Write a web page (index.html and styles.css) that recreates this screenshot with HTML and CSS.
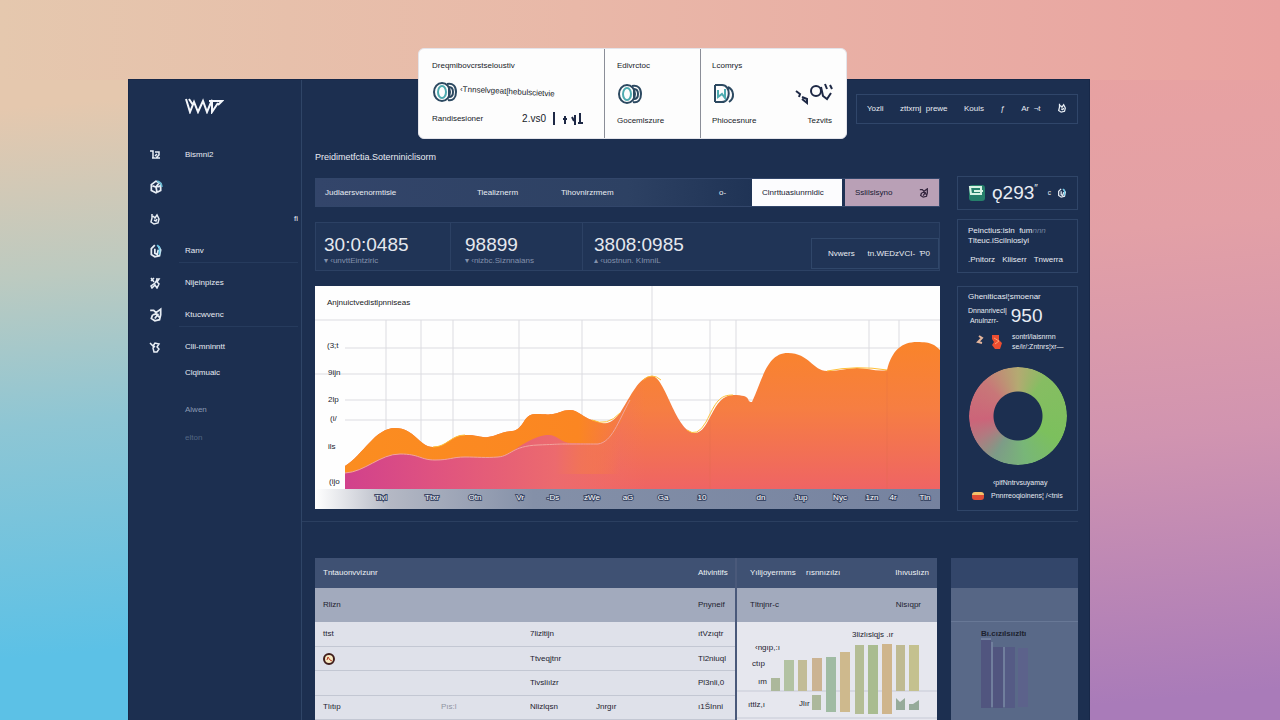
FILE: index.html
```html
<!DOCTYPE html>
<html lang="en">
<head>
<meta charset="utf-8">
<title>Dashboard</title>
<link rel="stylesheet" href="styles.css">
</head>
<body>
<svg class="defs" aria-hidden="true">
  <symbol id="i-flag" viewBox="0 0 12 12"><path d="M1 2h3v7M3 9h3M6 3h4v3L7 9h4M8 5l-2 2"/></symbol>
  <symbol id="i-globe" viewBox="0 0 12 12"><path d="M6 1 2 4v5l4 2 4-2V3L6 1ZM3 5l3 1 3-4M6 6l1 5M7 6l3-1" /><path d="M7 1c3 1 4 3 4 5" stroke="#68b8d0"/></symbol>
  <symbol id="i-user" viewBox="0 0 12 12"><path d="M3 1v4l-1 4 3 2 4-1 1-4-2-4-2 3-2-2M5 7l2 1 1-2"/></symbol>
  <symbol id="i-drop" viewBox="0 0 12 12"><path d="M5 1 2 4v5l3 2 4-1 1-5-2-3M5 4v4l2 1 1-4" /><path d="m7 1 2 2v6" stroke="#68c8e8"/></symbol>
  <symbol id="i-tools" viewBox="0 0 12 12"><path d="m2 1 3 4M5 1 2 4M7 2h3L8 5l2 2-2 4-2-3-3 3-1-2 4-3 2-3"/></symbol>
  <symbol id="i-gear" viewBox="0 0 12 12"><path d="M1 2h3l2 2 4-3v5l-1 4-4 1-3-2 1-3M3 6l3-1 3 3M5 9l3-4"/></symbol>
  <symbol id="i-cup" viewBox="0 0 12 12"><path d="m1 2 3 3 2-3 4 1-2 3 2 2-2 3H5L4 7l2-2"/></symbol>
  <symbol id="i-coin" viewBox="0 0 26 22"><ellipse cx="10" cy="11" rx="8" ry="9"/><ellipse cx="10" cy="11" rx="4" ry="6" stroke="#4eabb0"/><path d="M15 3c6-1 9 2 9 8s-3 9-8 8M17 6v10c3 0 4-2 4-5s-1-5-4-5" /></symbol>
</svg>

<main class="app">
  <section class="summary" aria-label="Summary">
    <div class="tile tile-wide">
      <h2>Dreqmibovcrstseloustiv</h2>
      <div class="tile-mid"><svg class="coin"><use href="#i-coin"/></svg><span class="tilt">‹Tnnselvgeat[hebulscietvie</span></div>
      <div class="tile-foot"><span>Randisesioner</span>
        <span class="spark">2.vs0 <svg width="34" height="14" viewBox="0 0 34 14"><path d="M4 0v13M15 4v8M13 7h4M22 5l2 4M25 3v10M30 1v10M28 11h5"/></svg></span></div>
    </div>
    <div class="tile">
      <h2>Edivrctoc</h2>
      <div class="tile-mid"><svg class="coin"><use href="#i-coin"/></svg></div>
      <div class="tile-foot"><span>Gocemlszure</span></div>
    </div>
    <div class="tile tile-last">
      <h2>Lcomrys</h2>
      <div class="tile-mid"><svg class="coin" viewBox="0 0 26 22"><path d="M3 2v17M3 2h7c9 0 9 17 0 17H3M16 4c6 3 7 11 1 15"/><path d="M6 7v7l4-3 3 4V6" stroke="#4eabb0"/></svg>
        <svg class="scrib" viewBox="0 0 40 24"><path d="m2 9 4 3-1 3M8 15l5 2v4l-5-4"/><circle cx="22" cy="9" r="5"/><path d="m27 5 2 9 4 3 4-6M31 2l2 5M36 3l2 4"/></svg></div>
      <div class="tile-foot"><span>Phiocesnure</span><span>Tezvits</span></div>
    </div>
  </section>

  <aside class="sidebar">
    <svg class="logo" viewBox="0 0 40 16" role="img" aria-label="Logo"><path d="M2 1 6 14 10 4l4 10 5-11 4 11 5-12v12l6-9M5 1l4 6M25 3h13l-4 4"/></svg>
    <nav>
      <ul>
        <li><svg class="ic"><use href="#i-flag"/></svg><a href="#">Bismni2</a></li>
        <li><svg class="ic big"><use href="#i-globe"/></svg></li>
        <li><svg class="ic"><use href="#i-user"/></svg><span class="mark">ﬁ</span></li>
        <li class="rule"><svg class="ic big"><use href="#i-drop"/></svg><a href="#">Ranv</a></li>
        <li><svg class="ic"><use href="#i-tools"/></svg><a href="#">Nijeinpizes</a></li>
        <li class="rule"><svg class="ic big"><use href="#i-gear"/></svg><a href="#">Ktucwvenc</a></li>
        <li><svg class="ic"><use href="#i-cup"/></svg><a href="#">Clli-mninntt</a></li>
        <li class="short"><span class="ic"></span><a href="#">Clqimuaic</a></li>
        <li class="dim first"><span class="ic"></span><a href="#">Alwen</a></li>
        <li class="dim faint"><span class="ic"></span><a href="#">elton</a></li>
      </ul>
    </nav>
  </aside>

  <div class="content">
    <header class="topbar">
      <nav class="menu">
        <a href="#">Yozli</a><a href="#">zttxrnj&nbsp; prewe</a><a href="#">Kouis</a><a href="#">ƒ</a><a href="#">Ar&nbsp; ¬t</a>
        <button aria-label="Account"><svg class="ic small"><use href="#i-user"/></svg></button>
      </nav>
    </header>

    <div class="columns">
      <div class="primary">
        <h1>Preidimetfctia.Soterniniclisorm</h1>
        <div class="filters">
          <div class="fields">
            <button>Judlaersvenormtisie</button><button>Tiealiznerm</button><button>Tihovnirzrmem</button><button aria-label="Options">o-</button>
          </div>
          <button class="btn white">Clnrttuasiunrnldic</button>
          <button class="btn pink">Sslilslsyno <svg class="ic small"><use href="#i-gear"/></svg></button>
        </div>

        <div class="metrics">
          <div class="metric"><strong>30:0:0485</strong><span>▾ ‹unvttEintziric</span></div>
          <div class="metric"><strong>98899</strong><span>▾ ‹nizbc.Siznnaians</span></div>
          <div class="metric"><strong>3808:0985</strong><span>▴ ‹uostnun. KImniL</span></div>
          <div class="chip"><button>Nvwers</button><button>tn.WEDzVCI-&nbsp; Ƥ0</button></div>
        </div>

        <section class="chart">
          <h2>Anjnuictvedistlpnniseas</h2>
          <svg class="plot" viewBox="0 0 625 189" role="img" aria-label="Area chart">
            <defs>
              <linearGradient id="warm" x1="0" y1="0" x2="0" y2="1"><stop offset="0" stop-color="#fa842a"/><stop offset=".45" stop-color="#f67e42"/><stop offset="1" stop-color="#ef6464"/></linearGradient>
              <linearGradient id="rose" gradientUnits="userSpaceOnUse" x1="30" y1="0" x2="330" y2="0"><stop offset="0" stop-color="#d1418c"/><stop offset=".3" stop-color="#df5380"/><stop offset=".7" stop-color="#ec6a6e"/><stop offset="1" stop-color="#f1706a" stop-opacity="0"/></linearGradient>
              <linearGradient id="axis" x1="0" y1="0" x2="1" y2="0"><stop offset="0" stop-color="#fff"/><stop offset=".12" stop-color="#b4b8c4"/><stop offset=".35" stop-color="#8490a8"/><stop offset="1" stop-color="#75829f"/></linearGradient>
              <linearGradient id="gold" gradientUnits="userSpaceOnUse" x1="30" y1="0" x2="305" y2="0"><stop offset="0" stop-color="#fb8d20"/><stop offset=".85" stop-color="#fb8622"/><stop offset="1" stop-color="#fb8622" stop-opacity="0"/></linearGradient>
            </defs>
            <path class="grid" d="M0 0H625M30 28H625M0 54H625M30 80H625M30 100H625M71 0V130M106 0V130M138 0V130M204 0V130M267 0V130M337-34V60M395 0V100M421 0V80M554 0V60M584 0V60"/>
            <rect y="169" width="625" height="20" fill="url(#axis)"/>
            <path fill="url(#warm)" d="M30 146C48 135 60 108 80 108S104 127 118 127 136 115 150 115 165 118 173 117 185 112 197 111 208 94 220 94 231 95 238 94 247 90 255 90 269 98 277 100 287 104 292 103 301 98 305 93C316 76 324 56 337 56S361 113 380 113C395 113 397 75 418 75S430 82 437 82C448 58 452 33 473 33S498 51 512 51 532 48 542 48 563 52 572 50C577 30 587 22 602 22S620 25 625 30V169H30Z"/>
            <path fill="url(#gold)" d="M30 146C48 135 60 108 80 108S104 127 118 127 136 115 150 115 165 118 173 117 185 112 197 111 208 94 220 94 231 95 238 94 247 90 255 90 269 98 277 100 287 104 292 103 301 98 305 93V154H30Z"/>
            <path fill="url(#rose)" d="M30 153C50 152 65 134 85 134S105 140 120 140 137 137 150 137 170 138 183 137 203 124 223 117 242 123 257 123 270 124 283 124C300 122 308 98 318 78L330 60V169H30Z"/>
            <path class="edge" d="M30 153C50 152 65 134 85 134S105 140 120 140 137 137 150 137 170 138 183 137 197 126 223 125 242 124 257 124 270 124 283 124C297 122 303 102 315 80"/>
            <path class="rim" d="M118 127C132 127 136 115 150 115M277 100Q292 107 305 93M328 60Q337 52 346 60M372 110Q382 118 391 102C401 82 404 75 418 75M512 51Q542 45 572 50"/>
            <path class="seam" d="M395 100V169M572 52V169"/>
            <g class="lab"><text x="12" y="28">(3;t</text><text x="13" y="55">9ijn</text><text x="13" y="82">2lp</text><text x="15" y="101">(i/</text><text x="13" y="129">ils</text><text x="14" y="164">(ijo</text></g>
            <g class="lab ticks"><text x="66" y="180">Tivi</text><text x="117" y="180">Ttxr</text><text x="160" y="180">Otn</text><text x="205" y="180">Vr</text><text x="238" y="180">-Ds</text><text x="277" y="180">zWe</text><text x="313" y="180">aG</text><text x="348" y="180">Ga</text><text x="387" y="180">10</text><text x="446" y="180">dn</text><text x="486" y="180">Jup</text><text x="525" y="180">Nyc</text><text x="557" y="180">1zn</text><text x="578" y="180">4r</text><text x="610" y="180">Tin</text></g>
          </svg>
        </section>
      </div>

      <aside class="rail">
        <div class="card score">
          <svg width="18" height="18" viewBox="0 0 18 18"><rect x="1" y="1" width="16" height="16" rx="3" fill="#267f6b"/><path d="M2 3h11v7H3zM6 7h9" fill="none" stroke="#d8f3e4" stroke-width="2"/></svg>
          <strong>ǫ293<sup>″</sup></strong><small>c</small><svg class="ic small"><use href="#i-drop"/></svg>
        </div>
        <div class="card note">
          <p>Peinctius:isln &nbsp;fum<i>nnn</i><br>Tlteuc.iScilniosiyi</p>
          <div class="trio"><a href="#">.Pnitorz</a><a href="#">Kliiserr</a><a href="#">Tnwerra</a></div>
        </div>
        <div class="card share">
          <h2>Gheniticasl¦smoenar</h2>
          <div class="big-row"><p>Dnnanrivecl|<br>&nbsp;Anulnzrr-</p><strong>950</strong></div>
          <div class="alert"><svg width="40" height="18" viewBox="0 0 40 18"><path d="m11 3 3 2-4 4 4 1" fill="none" stroke="#e3b49b" stroke-width="2"/><path d="M24 2h7v5l3 3-2 6h-5l-3-4 2-3-2-3Z" fill="#ec4e31"/><path d="m26 5 5 3-4 3" fill="none" stroke="#ffa06e"/></svg>
            <p>sontrl/laisnrnn<br>se/ir/:Zntnrs¦xr—</p></div>
          <div class="donut"></div>
          <p class="caption">‹pifNntrvsuyamay</p>
          <p class="legend"><span class="dot"></span>Pnnrreoqioinens¦ /&lt;tnis</p>
        </div>
      </aside>
    </div>

    <div class="bottom">
      <div class="wide">
        <table>
          <thead>
            <tr><th>Tntauonvvizunr</th><th></th><th></th><th></th><th>Ativintifs</th></tr>
            <tr class="sub"><td>Rlizn</td><td></td><td></td><td></td><td>Pnyneif</td></tr>
          </thead>
          <tbody>
            <tr><td>ttst</td><td></td><td>7lizltijn</td><td></td><td>ıtVzıqtr</td></tr>
            <tr><td><svg class="badge" viewBox="0 0 12 12"><circle cx="6" cy="6" r="5" fill="#f6e7c0" stroke="#401e1c" stroke-width="2"/><path d="M4 7 5 4l2 3 2 1" fill="none" stroke="#b73a28"/></svg></td><td></td><td>Ttveqjtnr</td><td></td><td>Tl2niuql</td></tr>
            <tr><td></td><td></td><td>Tivsliılzr</td><td></td><td>Pl3nli,0</td></tr>
            <tr><td>Tlıtıp</td><td class="pale">Pıs:l</td><td>Nlizlqsn</td><td>Jnrgır</td><td>ı1ŠInni</td></tr>
          </tbody>
        </table>
        <section class="panel">
          <div class="head"><span>Yılijoyermms</span><span>rısnnızılzı</span><span class="end">Ihıvuslızn</span></div>
          <div class="subhead"><span>Tltnjnr-c</span><span>Nisıqpr</span></div>
          <svg class="bars" viewBox="0 0 200 98" role="img" aria-label="Bar chart">
            <path d="M0 69H200M0 96H200" stroke="#c7cad6"/>
            <g fill="#acb89b"><rect x="34" y="56" width="9" height="13"/><rect x="47" y="38" width="10" height="31" fill="#b2c2a2"/><rect x="61" y="38" width="9" height="31" fill="#c2bc96"/><rect x="75" y="36" width="10" height="33" fill="#cbb392"/><rect x="75" y="73" width="9" height="15"/><rect x="89" y="35" width="10" height="55" fill="#a0bba3"/><rect x="103" y="30" width="10" height="60" fill="#ceb98d"/><rect x="118" y="23" width="9" height="69" fill="#b4bd95"/><rect x="131" y="23" width="10" height="69" fill="#a9bc90"/><rect x="145" y="22" width="10" height="70" fill="#cfb58c"/><rect x="159" y="23" width="9" height="46" fill="#bfba92"/><rect x="172" y="23" width="10" height="46" fill="#c4c18f"/><path d="M159 76l4 4 5-4v12h-9zM172 82h4l6-4v10h-10z" fill="#96ab9a"/></g>
            <text x="115" y="15">3lizlıslqjs .ır</text><text x="18" y="28">‹ngıp,:ı</text><text x="15" y="44">ctıp</text><text x="21" y="62">ım</text><text x="11" y="85">ıttlz,ı</text><text x="62" y="84">Jlır</text>
          </svg>
        </section>
      </div>
      <section class="panel shade">
        <div class="head"></div>
        <div class="subhead"></div>
        <svg class="bars" viewBox="0 0 127 98" role="img" aria-label="Bar chart">
          <g fill="#51557f"><rect x="30" y="18" width="10" height="68"/><rect x="42" y="25" width="10" height="61"/><rect x="54" y="25" width="10" height="61" fill="#555b85"/><rect x="67" y="26" width="10" height="59" fill="#5c628b"/></g>
          <path d="M30 17h10M41 20v65M53 25v60" stroke="#8995b2"/>
          <text x="30" y="14" class="strong">Bı.cızılsıızltı</text>
        </svg>
      </section>
    </div>
  </div>
</main>
</body>
</html>
```

FILE: styles.css
```css
* { box-sizing: border-box; }
body {
  margin: 0;
  min-height: 100vh;
  padding: 79px 190px 0 10%;
  overflow: hidden;
  font: 8px/10px "Liberation Sans", Arial, sans-serif;
  color: #e8ecf3;
  background:
    linear-gradient(90deg, #e5c8ae 0%, #e9b8a8 45%, #e9a2a0 100%) top / 100% 80px no-repeat,
    linear-gradient(175deg, #e9a2a0 8%, #e3a0a6 35%, #d194b0 62%, #a97bb9 96%) right / 50% 100% no-repeat,
    linear-gradient(175deg, #e5c8ae 14%, #bccac0 36%, #8ec6d4 55%, #5cc1e6 85%) left / 50% 100% no-repeat;
}
h1, h2, p, ul { margin: 0; padding: 0; font-weight: normal; font-size: inherit; }
a { color: inherit; text-decoration: none; }
button { border: 0; padding: 0; background: none; color: inherit; font: inherit; text-align: left; }
.defs { position: absolute; width: 0; height: 0; }
.ic { width: 12px; height: 12px; flex: none; fill: none; stroke: #e8eef5; stroke-width: 1.5; }
.ic.big { width: 14px; height: 16px; }
.ic.small { width: 10px; height: 10px; }

.app {
  position: relative;
  display: grid;
  grid-template-columns: 173px minmax(0, 1fr);
  min-height: calc(100vh - 79px);
  background: #1c2f50;
  border: 1px solid #172848;
  border-bottom: 0;
}

.summary {
  position: absolute;
  top: -32px;
  left: 289px;
  display: flex;
  width: 429px;
  height: 91px;
  border-radius: 6px;
  background: #fdfdfd;
  color: #171b28;
  border: 1px solid #e4e4ea;
}
.tile { width: 96px; padding: 12px; display: flex; flex-direction: column; justify-content: space-between; border-left: 1px solid #8b8e98; }
.tile-wide { width: 185px; padding-left: 13px; border-left: 0; }
.tile-last { flex: 1; padding-left: 11px; }
.tile-mid, .tile-foot { display: flex; justify-content: space-between; align-items: center; white-space: nowrap; }
.coin { width: 26px; height: 22px; fill: none; stroke: #2c4961; stroke-width: 2; }
.tile-wide .tile-mid { justify-content: flex-start; gap: 2px; }
.tilt { rotate: 3deg; }
.spark { font-size: 10px; display: flex; align-items: center; gap: 4px; padding-right: 8px; }
.spark svg, .scrib { fill: none; stroke: #1d2845; stroke-width: 2; }
.scrib { width: 40px; height: 24px; }
.tile-last .tile-foot { padding-right: 2px; }

.sidebar { border-right: 1px solid #2f4567; }
.logo { display: block; width: 40px; height: 16px; margin: 18px 0 25px 55px; fill: none; stroke: #f3f6fb; stroke-width: 2; }
.sidebar ul { list-style: none; padding: 0 3px 0 20px; }
.sidebar li { display: flex; align-items: center; gap: 20px; height: 32px; position: relative; }
.sidebar li.rule::after { content: ""; position: absolute; right: 0; bottom: 4px; left: 30px; border-top: 1px solid #263b5d; }
.sidebar li .ic { margin-right: 4px; }
.sidebar li .ic.big { margin-right: 2px; }
.sidebar li.short { height: 20px; }
.sidebar li.dim { height: 28px; color: #8b9ab3; }
.sidebar li.faint { color: #536683; }
.sidebar li.first { margin-top: 13px; }
.mark { margin-left: auto; }

.content { padding: 14px 11px 0 13px; }
.topbar { display: flex; justify-content: flex-end; }
.menu { display: flex; align-items: center; justify-content: space-between; width: 222px; height: 30px; padding: 0 10px; border: 1px solid #30466a; }
.columns { display: grid; grid-template-columns: minmax(0, 1fr) 121px; gap: 17px; }
.primary { padding-top: 28px; }
h1 { font-size: 9px; }
.filters { display: grid; grid-template-columns: minmax(0, 1fr) 90px 94px; align-items: center; gap: 3px; margin-top: 16px; height: 29px; background: linear-gradient(90deg, #33456a, #2d4163 50%, #1e3254 72%); border: 1px solid #32466a; }
.fields { display: grid; grid-template-columns: 152px 84px 1fr 30px; padding-left: 9px; }
.btn { height: 27px; padding: 0 10px; display: flex; align-items: center; justify-content: space-between; color: #171a32; }
.white { background: #fcfcfe; }
.pink { background: #b9a0b6; }
.pink .ic { stroke: #33243d; }
.metrics { display: flex; margin-top: 15px; height: 49px; border: 1px solid #2c4164; background: #203456; }
.metric { padding: 11px 0 0 8px; width: 135px; border-right: 1px solid #2c4164; color: #8492ac; white-space: nowrap; }
.metric:nth-child(2) { width: 132px; padding-left: 14px; }
.metric:nth-child(3) { border: 0; padding-left: 11px; }
.metric strong { display: block; font-weight: normal; font-size: 19px; line-height: 22px; color: #e5e8ee; }
.chip { display: flex; align-items: center; justify-content: space-between; width: 128px; height: 31px; margin: 15px 0 0 auto; padding: 0 8px 0 16px; border: 1px solid #30476a; }

.chart { margin-top: 15px; background: #fefefe; color: #171922; }
.chart h2 { height: 34px; padding: 12px 12px 0; }
.plot { display: block; width: 100%; overflow: visible; }
.grid { stroke: #dcdce1; fill: none; }
.edge { stroke: #f2a39d; fill: none; }
.rim { stroke: #ffbf36; fill: none; }
.seam { stroke: #d96a4c; stroke-opacity: .25; fill: none; }
.lab { font-size: 8px; fill: #22242d; }
.lab.ticks { text-anchor: middle; fill: #fff; stroke: #3b4866; stroke-width: 2px; paint-order: stroke; }

.rail { padding-top: 52px; }
.card { border: 1px solid #2f4568; padding: 8px 10px; white-space: nowrap; }
.score { height: 34px; display: flex; align-items: center; gap: 6px; }
.score strong { font-size: 19px; line-height: 20px; font-weight: normal; flex: 1; }
.score sup { font-size: 10px; line-height: 0; }
.note { margin-top: 9px; height: 54px; padding-top: 6px; }
.note i { color: #71819d; }
.trio { display: flex; justify-content: space-between; margin-top: 9px; padding-right: 4px; }
.share { margin-top: 13px; height: 225px; padding: 5px 10px 0; }
.big-row { display: flex; gap: 4px; align-items: center; margin-top: 2px; font-size: 7px; }
.big-row strong { font-size: 19px; line-height: 24px; font-weight: normal; }
.alert { display: flex; gap: 4px; align-items: center; margin-top: 4px; font-size: 7px; }
.donut {
  width: 98px; height: 98px; margin: 15px auto 0;
  border-radius: 50%;
  background: conic-gradient(#b4aa72 0deg, #86bd62 35deg, #7cc05d 120deg, #78b678 170deg, #7d9c87 210deg, #b17a80 240deg, #cc6479 265deg, #c87778 315deg, #b4aa72 360deg);
  mask: radial-gradient(circle, transparent 24px, #000 25px);
}
.caption { margin: 13px 0 0 25px; font-size: 7px; }
.legend { display: flex; align-items: center; gap: 7px; margin-top: 3px; font-size: 7px; }
.dot { width: 12px; height: 8px; margin-left: 4px; border-radius: 3px; background: linear-gradient(#f5c26a 40%, #df4d36 40%); flex: none; }

.bottom { display: grid; grid-template-columns: minmax(0, 1fr) 127px; gap: 14px; margin: 10px 0 0 -13px; padding: 36px 0 0 13px; border-top: 1px solid #2b3f60; }
.wide { display: grid; grid-template-columns: minmax(0, 420fr) minmax(0, 202fr); background: #33476a; color: #1d222f; }
table { width: 100%; border-collapse: collapse; table-layout: fixed; background: #dfe1ea; }
th, td { padding: 0 8px; height: 24px; text-align: left; font-weight: normal; white-space: nowrap; }
th:nth-child(1) { width: 118px; }
th:nth-child(2) { width: 89px; }
th:nth-child(3) { width: 66px; }
th:nth-child(4) { width: 102px; }
th { height: 30px; background: #3f5173; color: #eef1f6; }
.sub td { height: 34px; background: #a2aabd; }
tbody tr { border-bottom: 1px solid #c3c7d3; }
.pale { color: #8f94a2; }
.badge { display: block; width: 12px; height: 12px; }
.panel { border-left: 2px solid #4a597a; background: #e6e7ee; }
.head { display: grid; grid-template-columns: 56px 1fr auto; align-items: center; height: 30px; padding: 0 8px 0 13px; background: #3f5173; color: #eef1f6; }
.subhead { display: flex; align-items: center; justify-content: space-between; height: 34px; padding: 0 16px 0 13px; background: #a2aabd; }
.bars { display: block; width: 100%; font-size: 8px; fill: #1d222f; }
.strong { font-weight: bold; }
.shade { border: 0; background: #596988; }
.shade .head { background: #33466a; }
.shade .subhead { background: #566685; border-bottom: 1px solid #687896; }
```
